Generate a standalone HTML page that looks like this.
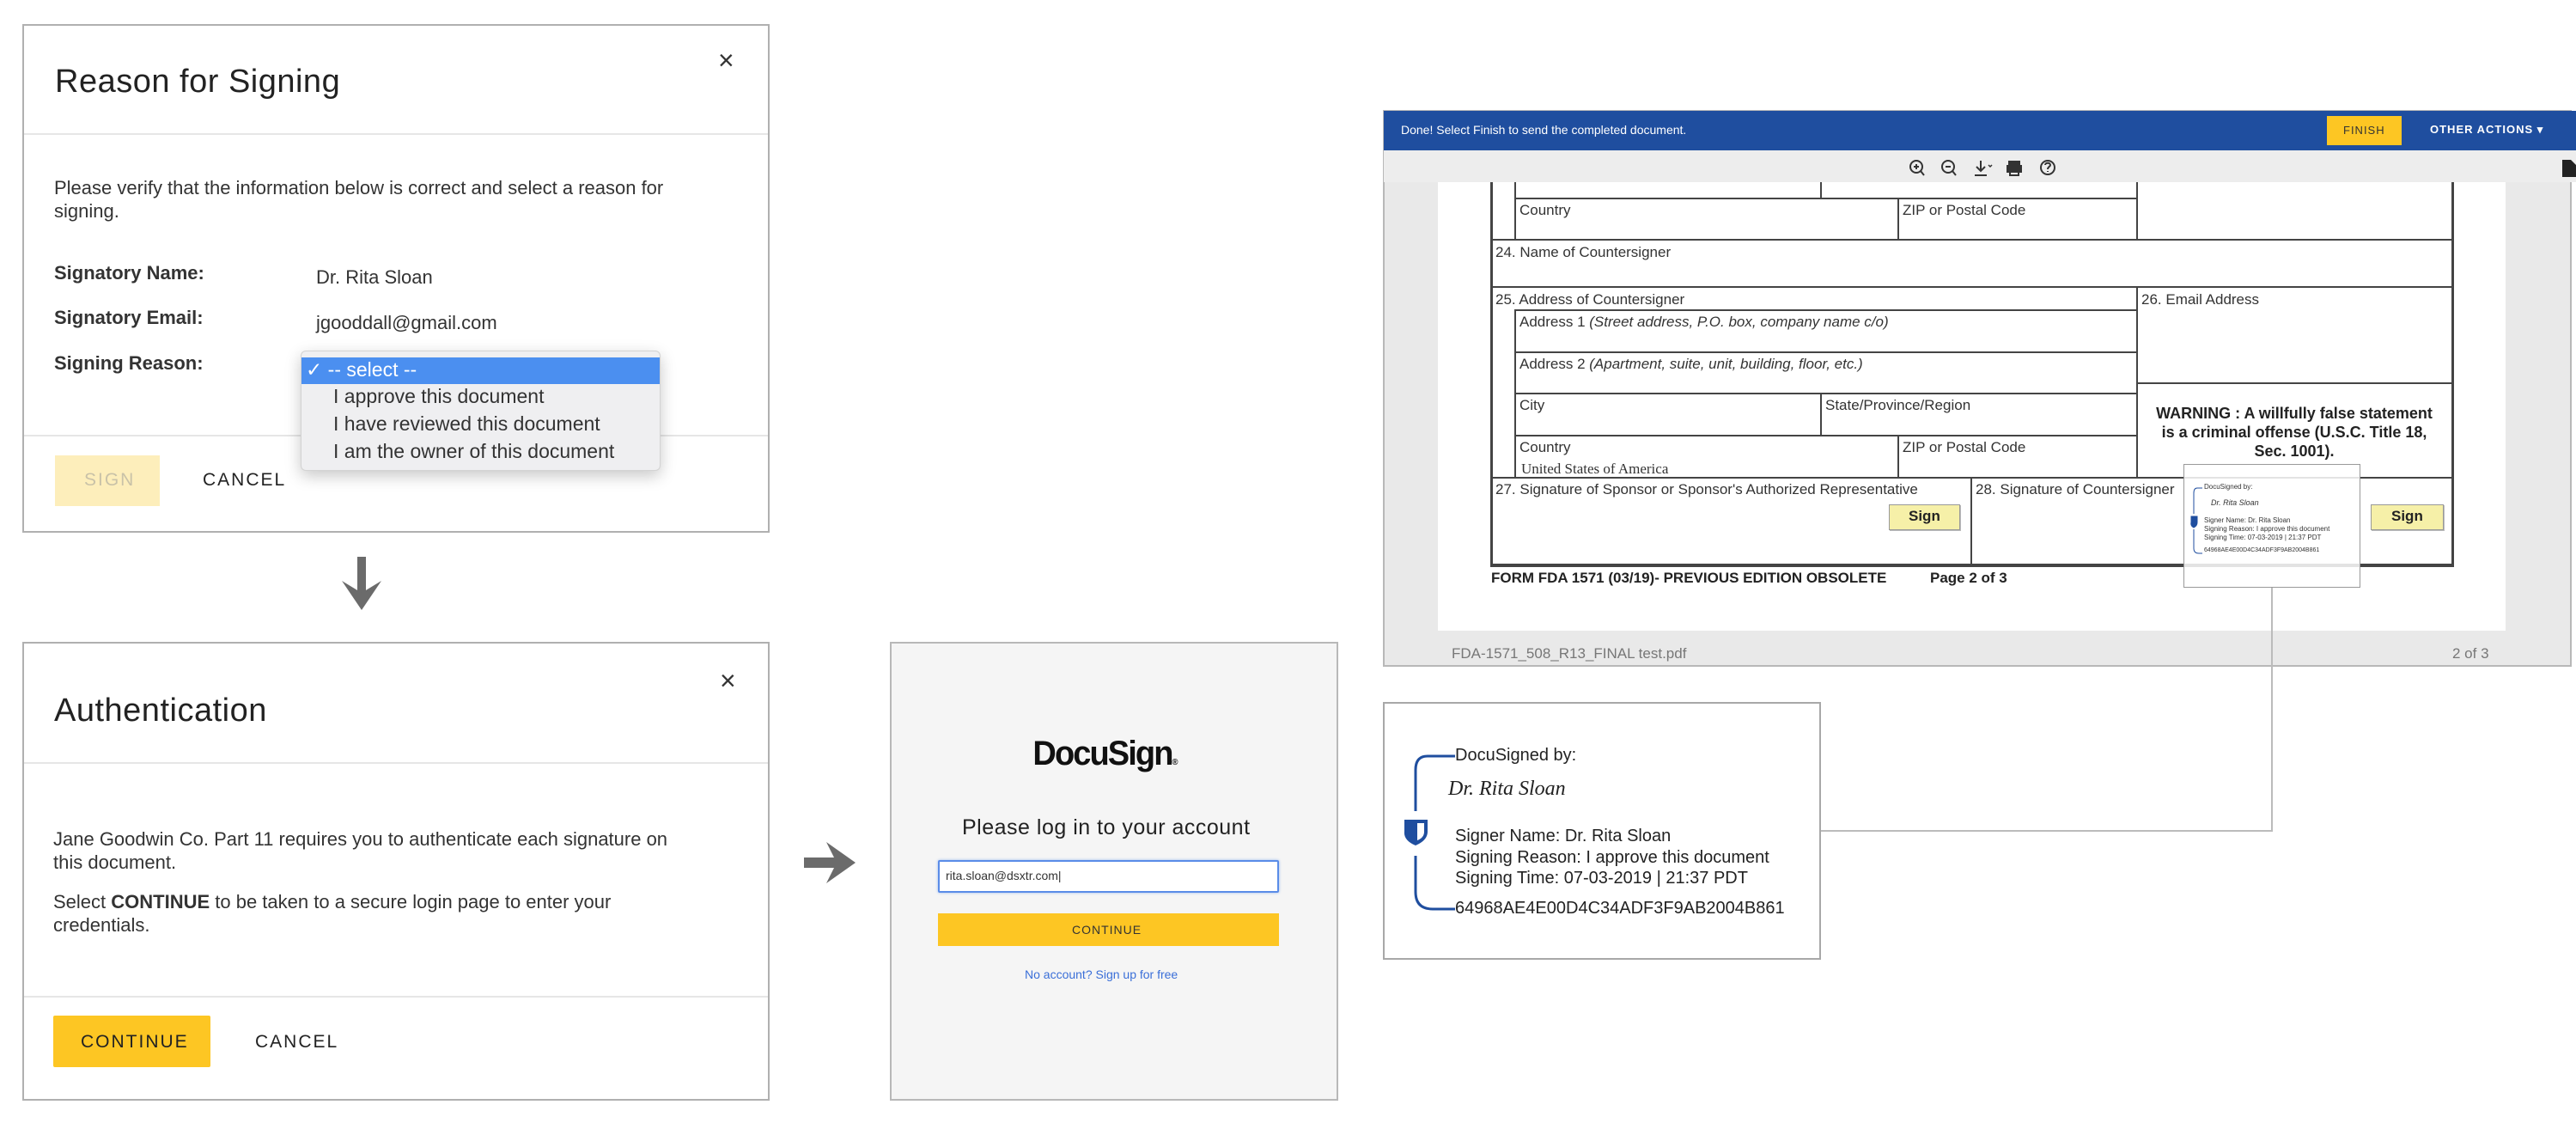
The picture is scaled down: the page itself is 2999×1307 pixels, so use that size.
<!DOCTYPE html>
<html><head><meta charset="utf-8">
<style>
*{margin:0;padding:0;box-sizing:border-box}
body{width:2999px;height:1307px;background:#fff;position:relative;overflow:hidden;font-family:"Liberation Sans",Arial,sans-serif;color:#222}
.a{position:absolute}
.dlg{position:absolute;border:2px solid #b0b0b0;background:#fff}
.hr{position:absolute;height:2px;background:#e6e6e6}
.t{position:absolute;white-space:nowrap}
.fl{position:absolute;background:#444}
.ft{position:absolute;white-space:nowrap;font-size:17px;color:#333}
</style></head><body>

<!-- Dialog 1 -->
<div class="dlg" style="left:26px;top:28px;width:870px;height:592px"></div>
<div class="t" style="left:64px;top:74px;font-size:38px;color:#222;letter-spacing:0.5px">Reason for Signing</div>
<div class="t" style="left:836px;top:52px;font-size:32px;color:#333">×</div>
<div class="hr" style="left:28px;top:155px;width:866px"></div>
<div class="t" style="left:63px;top:206px;font-size:22px;color:#333">Please verify that the information below is correct and select a reason for</div>
<div class="t" style="left:63px;top:233px;font-size:22px;color:#333">signing.</div>
<div class="t" style="left:63px;top:305px;font-size:22px;font-weight:bold;color:#333">Signatory Name:</div>
<div class="t" style="left:368px;top:310px;font-size:22px;color:#333">Dr. Rita Sloan</div>
<div class="t" style="left:63px;top:357px;font-size:22px;font-weight:bold;color:#333">Signatory Email:</div>
<div class="t" style="left:368px;top:363px;font-size:22px;color:#333">jgooddall@gmail.com</div>
<div class="t" style="left:63px;top:410px;font-size:22px;font-weight:bold;color:#333">Signing Reason:</div>
<div class="hr" style="left:28px;top:506px;width:866px"></div>
<div class="a" style="left:64px;top:530px;width:122px;height:59px;background:#fdeebb"></div>
<div class="t" style="left:98px;top:547px;font-size:21px;color:#c9c2a8;letter-spacing:2px">SIGN</div>
<div class="t" style="left:236px;top:547px;font-size:21px;color:#222;letter-spacing:2px">CANCEL</div>
<!-- dropdown -->
<div class="a" style="left:350px;top:408px;width:419px;height:140px;background:#efeff1;border:1px solid #d3d3d3;border-radius:6px;box-shadow:0 6px 18px rgba(0,0,0,.22)"></div>
<div class="a" style="left:351px;top:416px;width:417px;height:31px;background:#4b8ff0"></div>
<div class="t" style="left:356px;top:417px;font-size:23px;color:#fff">✓ -- select --</div>
<div class="t" style="left:388px;top:448px;font-size:23px;color:#333">I approve this document</div>
<div class="t" style="left:388px;top:480px;font-size:23px;color:#333">I have reviewed this document</div>
<div class="t" style="left:388px;top:512px;font-size:23px;color:#333">I am the owner of this document</div>

<!-- down arrow -->
<svg class="a" style="left:396px;top:648px" width="50" height="64" viewBox="0 0 50 64"><rect x="20" y="0" width="10" height="44" fill="#6b6b6b"/><path d="M2 28 L25 62 L48 28 L25 42 Z" fill="#6b6b6b"/></svg>

<!-- Dialog 2 -->
<div class="dlg" style="left:26px;top:747px;width:870px;height:534px"></div>
<div class="t" style="left:63px;top:806px;font-size:38px;color:#222;letter-spacing:0.5px">Authentication</div>
<div class="t" style="left:838px;top:774px;font-size:32px;color:#333">×</div>
<div class="hr" style="left:28px;top:887px;width:866px"></div>
<div class="t" style="left:62px;top:964px;font-size:22px;color:#333">Jane Goodwin Co. Part 11 requires you to authenticate each signature on</div>
<div class="t" style="left:62px;top:991px;font-size:22px;color:#333">this document.</div>
<div class="t" style="left:62px;top:1037px;font-size:22px;color:#333">Select <b>CONTINUE</b> to be taken to a secure login page to enter your</div>
<div class="t" style="left:62px;top:1064px;font-size:22px;color:#333">credentials.</div>
<div class="hr" style="left:28px;top:1159px;width:866px"></div>
<div class="a" style="left:62px;top:1182px;width:183px;height:60px;background:#fdc623;border-radius:2px"></div>
<div class="t" style="left:94px;top:1201px;font-size:21px;color:#222;letter-spacing:2px">CONTINUE</div>
<div class="t" style="left:297px;top:1201px;font-size:21px;color:#222;letter-spacing:2px">CANCEL</div>

<!-- right arrow -->
<svg class="a" style="left:936px;top:978px" width="62" height="52" viewBox="0 0 62 52"><rect x="0" y="20" width="40" height="12" fill="#6b6b6b"/><path d="M26 2 L60 26 L26 50 L38 26 Z" fill="#6b6b6b"/></svg>

<!-- login panel -->
<div class="a" style="left:1036px;top:747px;width:522px;height:534px;background:#f5f5f5;border:2px solid #b8b8b8"></div>
<div class="t" style="left:1198px;top:855px;font-size:40px;font-weight:bold;color:#111;letter-spacing:-2px;transform:scaleX(0.95)">DocuSign<span style="font-size:10px">®</span></div>
<div class="t" style="left:1120px;top:949px;font-size:25px;color:#222;letter-spacing:0.5px">Please log in to your account</div>
<div class="a" style="left:1092px;top:1001px;width:397px;height:38px;background:#fff;border:2px solid #5a8ce8;border-radius:2px;box-shadow:0 0 3px #9ab8ef"></div>
<div class="t" style="left:1101px;top:1011px;font-size:14px;color:#333">rita.sloan@dsxtr.com|</div>
<div class="a" style="left:1092px;top:1063px;width:397px;height:38px;background:#fdc623"></div>
<div class="t" style="left:1248px;top:1074px;font-size:14px;color:#333;letter-spacing:1px">CONTINUE</div>
<div class="t" style="left:1193px;top:1126px;font-size:14px;color:#3a6fd8">No account? Sign up for free</div>

<!-- viewer -->
<div class="a" style="left:1610px;top:128px;width:1384px;height:648px;background:#e9e9e9;border:2px solid #b8b8b8"></div>
<div class="a" style="left:1611px;top:129px;width:1388px;height:46px;background:#1f4e9f"></div>
<div class="t" style="left:1631px;top:143px;font-size:14px;color:#fff">Done! Select Finish to send the completed document.</div>
<div class="a" style="left:2709px;top:135px;width:87px;height:34px;background:#fdc623"></div>
<div class="t" style="left:2728px;top:144px;font-size:13px;color:#333;letter-spacing:1px">FINISH</div>
<div class="t" style="left:2829px;top:143px;font-size:13px;color:#fff;letter-spacing:1px;font-weight:bold">OTHER ACTIONS ▾</div>
<div class="a" style="left:1611px;top:175px;width:1388px;height:37px;background:#ededed"></div>
<svg class="a" style="left:2220px;top:184px" width="180" height="24" viewBox="0 0 180 24" fill="none" stroke="#333" stroke-width="2">
<circle cx="11" cy="10" r="7"/><path d="M16 15 L20 20 M8 10h6 M11 7v6"/>
<circle cx="48" cy="10" r="7"/><path d="M53 15 L57 20 M45 10h6"/>
<path d="M86 3v12 M81 10l5 5 5-5 M79 20h14"/><path d="M95 8l2 2 2-2" stroke-width="1.5"/>
<rect x="119" y="4" width="12" height="5" fill="#333"/><rect x="117" y="9" width="16" height="7" fill="#333"/><rect x="120" y="15" width="10" height="5"/>
<circle cx="164" cy="11" r="8"/><path d="M161 8c0-3 6-3 6 0 0 2-3 2-3 5 M164 15v1"/>
</svg>
<svg class="a" style="left:2983px;top:186px" width="16" height="20" viewBox="0 0 16 20"><path d="M0 0h10l6 6v14H0z" fill="#222"/></svg>
<div class="a" style="left:1674px;top:212px;width:1243px;height:522px;background:#fff"></div>
<div class="t" style="left:1690px;top:751px;font-size:17px;color:#777">FDA-1571_508_R13_FINAL test.pdf</div>
<div class="t" style="left:2855px;top:751px;font-size:17px;color:#777">2 of 3</div>

<!-- form lines -->
<div class="fl" style="left:1735px;top:212px;width:3px;height:447px"></div>
<div class="fl" style="left:2854px;top:212px;width:3px;height:447px"></div>
<div class="fl" style="left:1763px;top:212px;width:2px;height:67px"></div>
<div class="fl" style="left:2119px;top:212px;width:2px;height:19px"></div>
<div class="fl" style="left:2487px;top:212px;width:2px;height:67px"></div>
<div class="fl" style="left:1763px;top:230px;width:725px;height:2px"></div>
<div class="fl" style="left:2209px;top:230px;width:2px;height:49px"></div>
<div class="ft" style="left:1769px;top:235px">Country</div>
<div class="ft" style="left:2215px;top:235px">ZIP or Postal Code</div>
<div class="fl" style="left:1735px;top:278px;width:1121px;height:2px"></div>
<div class="ft" style="left:1741px;top:284px">24. Name of Countersigner</div>
<div class="fl" style="left:1735px;top:333px;width:1121px;height:2px"></div>
<div class="ft" style="left:1741px;top:339px">25. Address of Countersigner</div>
<div class="fl" style="left:2487px;top:333px;width:2px;height:223px"></div>
<div class="ft" style="left:2493px;top:339px">26. Email Address</div>
<div class="fl" style="left:1763px;top:360px;width:2px;height:196px"></div>
<div class="fl" style="left:1763px;top:360px;width:725px;height:2px"></div>
<div class="ft" style="left:1769px;top:365px">Address 1 <i>(Street address, P.O. box, company name c/o)</i></div>
<div class="fl" style="left:1763px;top:409px;width:725px;height:2px"></div>
<div class="ft" style="left:1769px;top:414px">Address 2 <i>(Apartment, suite, unit, building, floor, etc.)</i></div>
<div class="fl" style="left:2487px;top:445px;width:369px;height:2px"></div>
<div class="fl" style="left:1763px;top:457px;width:725px;height:2px"></div>
<div class="fl" style="left:2119px;top:457px;width:2px;height:50px"></div>
<div class="ft" style="left:1769px;top:462px">City</div>
<div class="ft" style="left:2125px;top:462px">State/Province/Region</div>
<div class="t" style="left:2496px;top:470px;width:350px;text-align:center;font-size:18px;font-weight:bold;color:#222;line-height:22px">WARNING : A willfully false statement<br>is a criminal offense (U.S.C. Title 18,<br>Sec. 1001).</div>
<div class="fl" style="left:1763px;top:506px;width:725px;height:2px"></div>
<div class="fl" style="left:2209px;top:506px;width:2px;height:50px"></div>
<div class="ft" style="left:1769px;top:511px">Country</div>
<div class="ft" style="left:2215px;top:511px">ZIP or Postal Code</div>
<div class="t" style="left:1771px;top:536px;font-size:17px;font-family:'Liberation Serif',serif;color:#333">United States of America</div>
<div class="fl" style="left:1735px;top:555px;width:1121px;height:2px"></div>
<div class="fl" style="left:2294px;top:555px;width:2px;height:103px"></div>
<div class="ft" style="left:1741px;top:560px">27. Signature of Sponsor or Sponsor's Authorized Representative</div>
<div class="ft" style="left:2300px;top:560px">28. Signature of Countersigner</div>
<div class="fl" style="left:1735px;top:656px;width:1122px;height:4px"></div>
<div class="a" style="left:2199px;top:587px;width:83px;height:30px;background:#f6f0a8;border:1px solid #999;box-shadow:1px 1px 0 #bbb"></div>
<div class="t" style="left:2222px;top:591px;font-size:17px;font-weight:bold;color:#222">Sign</div>
<div class="a" style="left:2760px;top:587px;width:85px;height:30px;background:#f6f0a8;border:1px solid #999;box-shadow:1px 1px 0 #bbb"></div>
<div class="t" style="left:2784px;top:591px;font-size:17px;font-weight:bold;color:#222">Sign</div>
<div class="t" style="left:1736px;top:663px;font-size:17px;font-weight:bold;color:#222">FORM FDA 1571 (03/19)- PREVIOUS EDITION OBSOLETE</div>
<div class="t" style="left:2247px;top:663px;font-size:17px;font-weight:bold;color:#222">Page 2 of 3</div>

<!-- small stamp -->
<div class="a" style="left:2542px;top:540px;width:206px;height:144px;border:1px solid #999;background:rgba(255,255,255,.85)"></div>
<svg class="a" style="left:2550px;top:566px" width="16" height="82" viewBox="0 0 16 82" fill="none" stroke="#1f4e9f" stroke-width="1"><path d="M14 2 H8 Q4 2 4 8 V32 M4 50 V72 Q4 78 10 78 H14"/><path d="M1 35 h7 v7 q0 4 -4 6 q-4 -2 -3 -6z" fill="#1f4e9f"/></svg>
<div class="t" style="left:2566px;top:562px;font-size:8px;color:#333">DocuSigned by:</div>
<div class="t" style="left:2574px;top:580px;font-size:9px;font-style:italic;color:#333">Dr. Rita Sloan</div>
<div class="t" style="left:2566px;top:601px;font-size:8px;color:#333;line-height:10px">Signer Name: Dr. Rita Sloan<br>Signing Reason: I approve this document<br>Signing Time: 07-03-2019 | 21:37 PDT</div>
<div class="t" style="left:2566px;top:637px;font-size:7px;color:#333">64968AE4E00D4C34ADF3F9AB2004B861</div>

<!-- connector -->
<div class="a" style="left:2644px;top:684px;width:2px;height:283px;background:#bbb"></div>
<div class="a" style="left:2119px;top:966px;width:527px;height:2px;background:#bbb"></div>

<!-- big stamp -->
<div class="a" style="left:1610px;top:817px;width:510px;height:300px;border:2px solid #a8a8a8;background:#fff"></div>
<svg class="a" style="left:1630px;top:876px" width="70" height="190" viewBox="0 0 70 190" fill="none" stroke="#1f4e9f" stroke-width="3"><path d="M64 4 H32 Q18 4 18 20 V68 M18 120 V162 Q18 182 38 182 H64"/><path d="M5 78 H32 V92 Q32 102 18 108 Q4 102 5 92 Z" fill="#1f4e9f" stroke="none"/><path d="M20 82 H28 V92 Q28 99 20 102 Z" fill="#fff" stroke="none"/></svg>
<div class="t" style="left:1694px;top:868px;font-size:20px;color:#222">DocuSigned by:</div>
<div class="t" style="left:1686px;top:905px;font-size:24px;font-style:italic;font-family:'Liberation Serif',serif;color:#222">Dr. Rita Sloan</div>
<div class="t" style="left:1694px;top:961px;font-size:20px;color:#222;line-height:24.5px">Signer Name: Dr. Rita Sloan<br>Signing Reason: I approve this document<br>Signing Time: 07-03-2019 | 21:37 PDT</div>
<div class="t" style="left:1694px;top:1046px;font-size:20px;color:#222">64968AE4E00D4C34ADF3F9AB2004B861</div>

</body></html>
